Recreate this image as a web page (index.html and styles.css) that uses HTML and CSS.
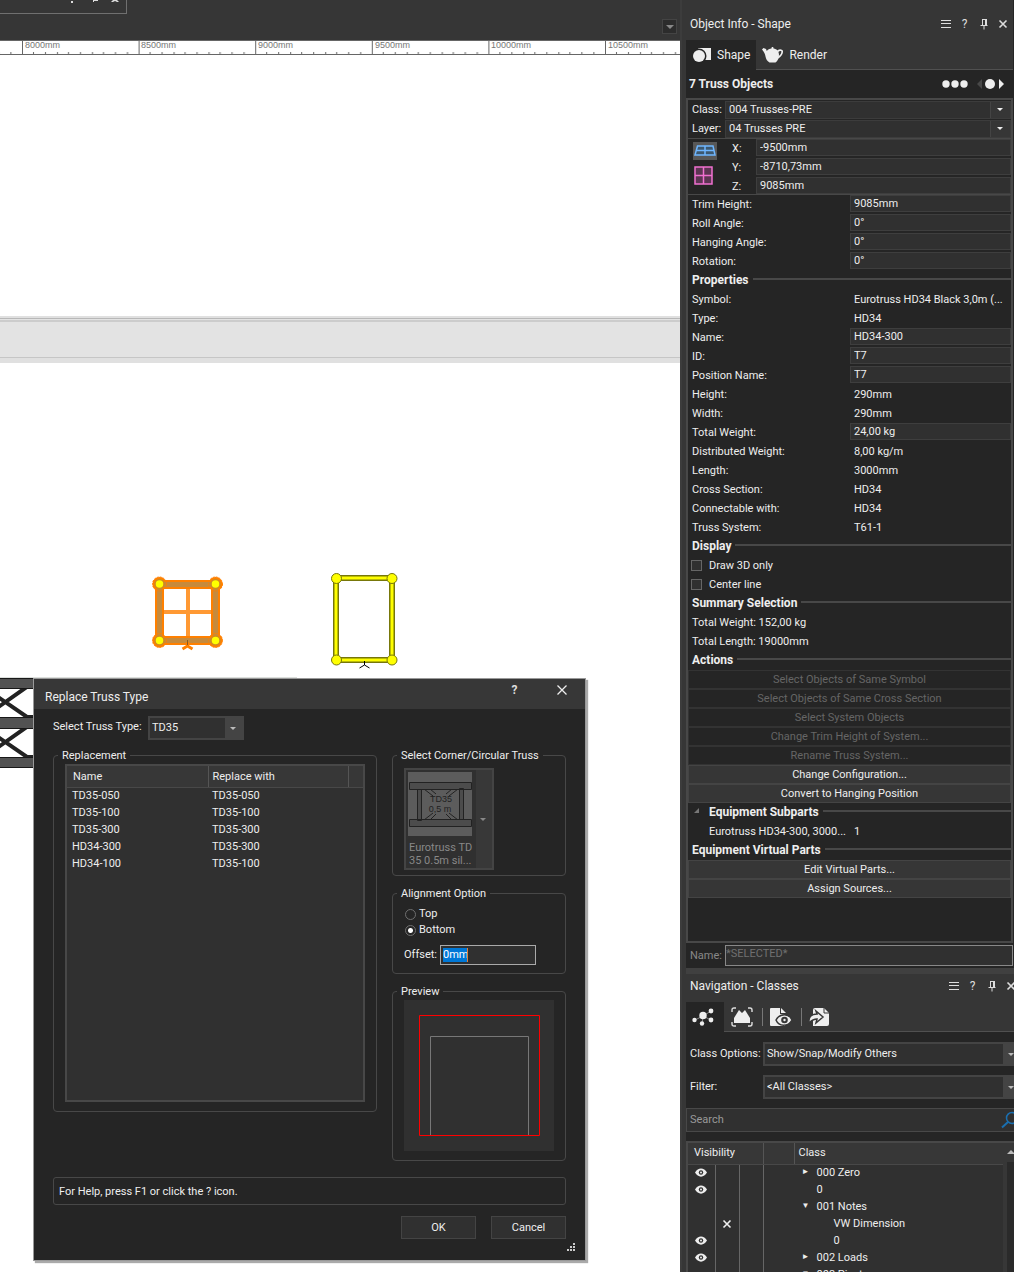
FILE: index.html
```html
<!DOCTYPE html>
<html lang="en">
<head>
<meta charset="utf-8">
<title>Replace Truss Type</title>
<link rel="stylesheet" href="styles.css">
</head>
<body>
<svg class="defs" width="0" height="0" aria-hidden="true">
  <symbol id="i-menu" viewBox="0 0 12 12"><path d="M1 2.500h10M1 5.500h10M1 9.500h10" stroke="currentColor" fill="none"/></symbol>
  <symbol id="i-pin" viewBox="0 0 12 12"><path d="M4 1.500h5M4.500 1.500v5.500M7.500 1v6M8.500 1v6M2.500 7.500h7M6 7.500v4" stroke="currentColor" fill="none"/></symbol>
  <symbol id="i-close" viewBox="0 0 12 12"><path d="M2.500 2.500l7 7M9.500 2.500l-7 7" stroke="currentColor" stroke-width="1.600" fill="none"/></symbol>
  <symbol id="i-eye" viewBox="0 0 12 9"><path d="M0 4.500C3-1 9-1 12 4.500C9 10 3 10 0 4.500z" fill="#eee"/><circle cx="6" cy="4.500" r="2.200" fill="#303030"/><circle cx="6" cy="4.500" r="1" fill="#eee"/></symbol>
</svg>
<div class="app">
  <main class="drawing">
    <div class="toolbar">
      <div class="stub">
        <svg width="60" height="4" viewBox="0 0 60 4"><path d="M0 1h2v2h-2zM22 0h5v1h-4v1h-1zM40 2l2-2h4l2 2h-2l-2-1l-2 1z" fill="#ddd"/></svg>
      </div>
      <button class="drop" aria-label="Views"><span class="tri"></span></button>
    </div>
    <svg class="ruler" height="15">
      <defs><pattern id="ticks" x="22" y="0" width="116.600" height="15" patternUnits="userSpaceOnUse"><path d="M11.500 12v3M23.500 12v3M35.500 12v3M46.500 12v3M58.500 12v3M70.500 12v3M81.500 12v3M93.500 12v3M105.500 12v3" stroke="#666"/><path d="M.5 0v15" stroke="#666"/></pattern></defs>
      <rect width="100%" height="15" fill="#fff"/><rect width="100%" height="15" fill="url(#ticks)"/>
      <path d="M0 .5h4000M0 14.500h4000" stroke="#666"/>
      <g class="marks"><text x="25" y="8">8000mm</text><text x="141" y="8">8500mm</text><text x="258" y="8">9000mm</text><text x="375" y="8">9500mm</text><text x="491" y="8">10000mm</text><text x="608" y="8">10500mm</text></g>
    </svg>
    <div class="canvas">
      <div class="beam"></div>
      <svg class="trusses" width="420" height="230" viewBox="0 550 420 230">
        <path d="M0 677.500h297" stroke="#dcdfdc"/>
        <g stroke="#222" stroke-width="4" fill="none"><path d="M-20 720L28 686h12M-18 686L27 717h12M-20 760L28 726h12M-18 726L27 757h12"/></g>
        <g fill="#525252"><path d="M0 679h40v9H0zM0 718h40v10H0zM0 758h40v9H0z"/></g>
        <path d="M0 678.500h40M0 688.500h40M0 717.500h40M0 728.500h40M0 757.500h40M0 767.500h40" stroke="#181818"/>
        <path d="M188 584v56M160 612h56" stroke="#ff9933" stroke-width="4"/>
        <g fill="#ff8000"><circle cx="159.500" cy="584" r="7"/><circle cx="215.500" cy="584" r="7"/><circle cx="159.500" cy="640.500" r="7"/><circle cx="215.500" cy="640.500" r="7"/></g>
        <rect x="159.500" y="584.500" width="56" height="56" fill="none" stroke="#ff8000" stroke-width="9"/>
        <rect x="159.500" y="584.500" width="56" height="56" fill="none" stroke="#c68a3c" stroke-width="5"/>
        <g fill="none" stroke="#ff8000" stroke-dasharray="2 1"><circle cx="159.500" cy="584" r="7"/><circle cx="215.500" cy="584" r="7"/><circle cx="159.500" cy="640.500" r="7"/><circle cx="215.500" cy="640.500" r="7"/></g>
        <g fill="#ff0" stroke="#d08a20" stroke-width="1.500"><circle cx="159.500" cy="584" r="4.500"/><circle cx="215.500" cy="584" r="4.500"/><circle cx="159.500" cy="640.500" r="4.500"/><circle cx="215.500" cy="640.500" r="4.500"/></g>
        <path d="M187.500 642v4l-5 3M187.500 646l5 3" stroke="#ff8000" stroke-width="3" fill="none"/>
        <path d="M187.500 640v5" stroke="#8a5a20"/>
        <rect x="336" y="578" width="56" height="82" fill="none" stroke="#77770a" stroke-width="6"/>
        <rect x="336" y="578" width="56" height="82" fill="none" stroke="#ff0" stroke-width="3"/>
        <g fill="#ff0" stroke="#77770a"><circle cx="336.500" cy="578.500" r="5"/><circle cx="392" cy="578.500" r="5"/><circle cx="336.500" cy="660" r="5"/><circle cx="392" cy="660" r="5"/></g>
        <path d="M364.500 661v4l-5 3M364.500 665l5 3" stroke="#000" fill="none"/>
      </svg>
      <section class="dialog" role="dialog" aria-labelledby="dlg-title">
        <header class="dlg-head">
          <h1 id="dlg-title">Replace Truss Type</h1>
          <button class="plain" aria-label="Help"><b>?</b></button>
          <button class="plain" aria-label="Close"><svg width="12" height="12" viewBox="0 0 12 12"><path d="M1.500 1.500l9 9M10.500 1.500l-9 9" stroke="#eee" stroke-width="1.300"/></svg></button>
        </header>
        <div class="dlg-body">
          <div class="type-row"><label for="tt">Select Truss Type:</label><span class="sel sel-lg type"><select id="tt"><option>TD35</option></select></span></div>
          <div class="columns">
            <fieldset class="repl"><legend>Replacement</legend>
              <div class="listbox"><table>
                <colgroup><col class="c-name"><col class="c-with"><col></colgroup>
                <thead><tr><th>Name</th><th>Replace with</th><th></th></tr></thead>
                <tbody>
                <tr><td>TD35-050</td><td>TD35-050</td><td></td></tr>
                <tr><td>TD35-100</td><td>TD35-100</td><td></td></tr>
                <tr><td>TD35-300</td><td>TD35-300</td><td></td></tr>
                <tr><td>HD34-300</td><td>TD35-300</td><td></td></tr>
                <tr><td>HD34-100</td><td>TD35-100</td><td></td></tr>
                </tbody></table></div>
            </fieldset>
            <div class="side">
              <fieldset><legend>Select Corner/Circular Truss</legend>
                <button class="picker" disabled>
                  <span class="pick-main">
                    <svg width="64" height="64" viewBox="0 0 64 64"><path fill="#5c5c5c" d="M0 0h64v64H0z"/><g fill="#4c4c4c" stroke="#222"><path d="M16 17l9 7M22 17l6 5M50 17l-9 7M44 17l-6 5M16 48l9-7M22 48l6-6M50 48l-9-7M44 48l-6-6"/><path d="M1.500 10.500h62v7h-62zM1.500 47.500h62v7h-62zM9.500 17.500h4v31h-4zM51.500 16.500h4v31h-4z"/></g><g class="thumb"><text x="33" y="30">TD35</text><text x="32" y="40">0,5 m</text></g></svg>
                    <span>Eurotruss TD<br>35 0.5m sil...</span>
                  </span>
                  <span class="pick-arrow"><span class="tri"></span></span>
                </button>
              </fieldset>
              <fieldset class="align"><legend>Alignment Option</legend>
                <label class="radio"><input type="radio" name="al">Top</label>
                <label class="radio"><input type="radio" name="al" checked>Bottom</label>
                <div class="offset"><label for="off">Offset:</label><span class="edit"><input id="off" value="0mm"></span></div>
              </fieldset>
              <fieldset class="prev"><legend>Preview</legend>
                <svg width="150" height="151" viewBox="0 0 150 151"><path fill="#303030" d="M0 0h150v151H0z"/><path d="M26.500 135V36.500h98V135" fill="none" stroke="#777"/><path d="M15.500 15.500h120v120h-120z" fill="none" stroke="#f00"/></svg>
              </fieldset>
            </div>
          </div>
          <p class="help">For Help, press F1 or click the ? icon.</p>
          <div class="actions"><button>OK</button><button>Cancel</button></div>
        </div>
        <svg class="grip" width="8" height="8" viewBox="0 0 8 8"><path d="M6 0h2v2H6zM3 3h2v2H3zM6 3h2v2H6zM0 6h2v2H0zM3 6h2v2H3zM6 6h2v2H6z" fill="#ccc"/></svg>
      </section>
    </div>
  </main>

  <aside class="panels">
    <section class="info">
      <header class="pal-head"><h2>Object Info - Shape</h2>
        <button class="plain" aria-label="Menu"><svg width="12" height="12"><use href="#i-menu"/></svg></button><button class="plain" aria-label="Help">?</button><button class="plain" aria-label="Pin"><svg width="12" height="12"><use href="#i-pin"/></svg></button><button class="plain" aria-label="Close"><svg width="12" height="12"><use href="#i-close"/></svg></button>
      </header>
      <nav class="tabs">
        <button class="tab on"><svg width="20" height="18" viewBox="0 0 20 18"><path d="M6 2h13v12h-6" fill="#eee"/><circle cx="7" cy="10" r="7.500" fill="#252525"/><circle cx="7" cy="10" r="6" fill="#eee"/></svg>Shape</button>
        <button class="tab"><svg width="22" height="18" viewBox="0 0 22 18"><path d="M9.500 2.500c-.5-2 2.500-2 2 0c3.500.3 5.500 3 5.500 6.500c0 3.500-1.500 6-3.500 7.500h-6C5 15 4 13 3.500 10.500C3 8 2.500 6.500 0 3.500l1.500-1.500l2.500 1l.8 2c1-1.500 2.700-2.300 4.700-2.500z" fill="#eee"/><path d="M15.500 5.500c2.500-2 5-1.500 4.700.500c-.3 3-2.200 4.500-4.700 6" fill="none" stroke="#eee" stroke-width="1.700"/></svg>Render</button>
      </nav>
      <div class="count"><h3>7 Truss Objects</h3><svg width="64" height="12" viewBox="0 0 64 12"><g fill="#eee"><circle cx="5" cy="6" r="3.700"/><circle cx="14" cy="6" r="3.700"/><circle cx="23" cy="6" r="3.700"/><circle cx="49" cy="6" r="5"/><path d="M58 1v10l5-5z"/></g><path d="M41 1v10l-5-5z" fill="#484848"/></svg></div>
      <div class="props">
        <div class="row"><label for="cls">Class:</label><span class="sel grow"><select id="cls"><option>004 Trusses-PRE</option></select></span></div>
        <div class="row"><label for="lay">Layer:</label><span class="sel grow"><select id="lay"><option>04 Trusses PRE</option></select></span></div>
        <div class="coords">
          <div class="planes">
            <svg width="24" height="18" viewBox="0 0 24 18"><path d="M0 0h24v18H0z" fill="#585858"/><path d="M4.500 4h15.500l2 9H2zM12 4v9M3.500 8.500h17" fill="#3c5870" stroke="#6fb6ff" stroke-width="1.500"/></svg>
            <svg width="20" height="20" viewBox="0 0 20 20"><path d="M2 2h17v17H2zM10.500 2v17M2 10.500h17" fill="#5c3553" stroke="#f070d0" stroke-width="1.500"/></svg>
          </div>
          <div class="xyz">
            <div class="row"><label for="x">X:</label><input id="x" value="-9500mm"></div>
            <div class="row"><label for="y">Y:</label><input id="y" value="-8710,73mm"></div>
            <div class="row"><label for="z">Z:</label><input id="z" value="9085mm"></div>
          </div>
        </div>
        <div class="row kv"><label for="trim">Trim Height:</label><input id="trim" value="9085mm"></div>
        <div class="row kv"><label for="roll">Roll Angle:</label><input id="roll" value="0°"></div>
        <div class="row kv"><label for="hang">Hanging Angle:</label><input id="hang" value="0°"></div>
        <div class="row kv"><label for="rot">Rotation:</label><input id="rot" value="0°"></div>
        <h4 class="sec">Properties</h4>
        <div class="row kv"><span>Symbol:</span><output>Eurotruss HD34 Black 3,0m (...</output></div>
        <div class="row kv"><span>Type:</span><output>HD34</output></div>
        <div class="row kv"><label for="nm">Name:</label><input id="nm" value="HD34-300"></div>
        <div class="row kv"><label for="id">ID:</label><input id="id" value="T7"></div>
        <div class="row kv"><label for="pos">Position Name:</label><input id="pos" value="T7"></div>
        <div class="row kv"><span>Height:</span><output>290mm</output></div>
        <div class="row kv"><span>Width:</span><output>290mm</output></div>
        <div class="row kv"><label for="tw">Total Weight:</label><input id="tw" value="24,00 kg"></div>
        <div class="row kv"><span>Distributed Weight:</span><output>8,00 kg/m</output></div>
        <div class="row kv"><span>Length:</span><output>3000mm</output></div>
        <div class="row kv"><span>Cross Section:</span><output>HD34</output></div>
        <div class="row kv"><span>Connectable with:</span><output>HD34</output></div>
        <div class="row kv"><span>Truss System:</span><output>T61-1</output></div>
        <h4 class="sec">Display</h4>
        <label class="row check"><input type="checkbox">Draw 3D only</label>
        <label class="row check"><input type="checkbox">Center line</label>
        <h4 class="sec">Summary Selection</h4>
        <div class="row">Total Weight: 152,00 kg</div>
        <div class="row">Total Length: 19000mm</div>
        <h4 class="sec">Actions</h4>
        <button class="act" disabled>Select Objects of Same Symbol</button>
        <button class="act" disabled>Select Objects of Same Cross Section</button>
        <button class="act" disabled>Select System Objects</button>
        <button class="act" disabled>Change Trim Height of System...</button>
        <button class="act" disabled>Rename Truss System...</button>
        <button class="act">Change Configuration...</button>
        <button class="act">Convert to Hanging Position</button>
        <h4 class="sec"><svg class="fold" width="17" height="6" viewBox="0 0 17 6"><path d="M7 0v5H2z" fill="#777"/></svg>Equipment Subparts</h4>
        <div class="row part"><span>Eurotruss HD34-300, 3000...</span><span>1</span></div>
        <h4 class="sec">Equipment Virtual Parts</h4>
        <button class="act">Edit Virtual Parts...</button>
        <button class="act">Assign Sources...</button>
      </div>
      <div class="name-row"><label for="sel">Name:</label><input id="sel" value="*SELECTED*" disabled></div>
    </section>

    <section class="nav">
      <header class="pal-head"><h2>Navigation - Classes</h2>
        <button class="plain" aria-label="Menu"><svg width="12" height="12"><use href="#i-menu"/></svg></button><button class="plain" aria-label="Help">?</button><button class="plain" aria-label="Pin"><svg width="12" height="12"><use href="#i-pin"/></svg></button><button class="plain" aria-label="Close"><svg width="12" height="12"><use href="#i-close"/></svg></button>
      </header>
      <nav class="tabs icons">
        <button class="tab on" aria-label="Classes"><svg width="22" height="18" viewBox="0 0 22 18"><path d="M3 12l8-4l8-5M11 8l8 4M11 8l-1 8" stroke="#888" fill="none"/><g fill="#eee"><circle cx="11" cy="7.500" r="3.700"/><circle cx="2.500" cy="12" r="2.200"/><circle cx="19" cy="3" r="2.400"/><circle cx="19" cy="12" r="2.400"/><circle cx="10" cy="15.500" r="2.200"/></g></svg></button>
        <button class="tab" aria-label="Viewports"><svg width="22" height="20" viewBox="0 0 22 20"><path d="M1 5V3q0-2 2-2h2M17 1h2q2 0 2 2v2M21 15v2q0 2-2 2h-2M5 19H3q-2 0-2-2v-2" stroke="#ddd" stroke-width="1.400" fill="none"/><path d="M3 16V11l5-8l3 3l3-3l5 8v5z" fill="#eee"/></svg></button>
        <i></i>
        <button class="tab" aria-label="Saved views"><svg width="24" height="20" viewBox="0 0 24 20"><path d="M1 2q0-1 1-1h9v6h5v12H2q-1 0-1-1z" fill="#eee"/><path d="M12 1l5 5h-5z" fill="#eee"/><path d="M7 13c4-7 13-7 16 0c-4 7-13 7-16 0z" fill="#eee" stroke="#363636" stroke-width="1.500"/><circle cx="15.500" cy="13" r="3.300" fill="#363636"/><circle cx="15.500" cy="13" r="1.200" fill="#eee"/></svg></button>
        <i></i>
        <button class="tab" aria-label="References"><svg width="22" height="20" viewBox="0 0 22 20"><path d="M7 1h9l5 5v11q0 2-2 2H5V3q0-2 2-2z" fill="#eee"/><path d="M16 1v5h5" fill="none" stroke="#363636"/><path d="M8 4l7 6l-7 6l1-4q-4 0-8 4q-1-9 8-9z" fill="#eee" stroke="#363636" stroke-width="1.500"/></svg></button>
      </nav>
      <div class="nav-form">
        <label for="co">Class Options:</label><span class="sel sel-lg"><select id="co"><option>Show/Snap/Modify Others</option></select></span>
        <label for="fi">Filter:</label><span class="sel sel-lg"><select id="fi"><option>&lt;All Classes&gt;</option></select></span>
      </div>
      <div class="search"><input aria-label="Search" placeholder="Search"><svg width="20" height="18" viewBox="0 0 20 18"><circle cx="11" cy="7" r="5.500" fill="none" stroke="#1a6fb0" stroke-width="1.500"/><path d="M7 11l-6 5.500" stroke="#1a6fb0" stroke-width="2"/></svg></div>
      <div class="classes">
        <table>
          <colgroup><col class="v1"><col class="v2"><col class="v2"><col class="v3"><col></colgroup>
          <thead><tr><th colspan="3">Visibility</th><th></th><th>Class</th></tr></thead>
          <tbody>
            <tr><td><svg width="12" height="9"><use href="#i-eye"/></svg></td><td></td><td></td><td colspan="2"><span class="exp">►</span>000 Zero</td></tr>
            <tr><td><svg width="12" height="9"><use href="#i-eye"/></svg></td><td></td><td></td><td colspan="2"><span class="exp"></span>0</td></tr>
            <tr><td></td><td></td><td></td><td colspan="2"><span class="exp">▼</span>001 Notes</td></tr>
            <tr><td></td><td><svg class="no" width="12" height="12"><use href="#i-close"/></svg></td><td></td><td colspan="2" class="deep"><span class="exp"></span>VW Dimension</td></tr>
            <tr><td><svg width="12" height="9"><use href="#i-eye"/></svg></td><td></td><td></td><td colspan="2" class="deep"><span class="exp"></span>0</td></tr>
            <tr><td><svg width="12" height="9"><use href="#i-eye"/></svg></td><td></td><td></td><td colspan="2"><span class="exp">►</span>002 Loads</td></tr>
            <tr><td></td><td></td><td></td><td colspan="2"><span class="exp">▼</span>003 Pivot</td></tr>
          </tbody>
        </table>
        <div class="scroll"><span class="tri up"></span><div class="track"></div></div>
      </div>
    </section>
  </aside>
</div>
</body>
</html>
```
FILE: styles.css
```css
*{box-sizing:border-box}
body{margin:0;background:#363636;color:#eee;font:11px/14px Roboto,"Liberation Sans",sans-serif}
h1,h2,h3,h4,p{margin:0;font-size:12px;font-weight:400}
button,input,select{font:inherit;color:inherit;margin:0;padding:0;border:0;background:none;border-radius:0}
svg{display:block;flex:none}
table{border-collapse:collapse;table-layout:fixed;width:100%}
th{font-weight:400;text-align:left}
th,td{padding:0;white-space:nowrap}
.defs{position:absolute}
.app{display:flex;height:100vh;overflow:hidden}
.tri{display:block;width:0;height:0;border:4px solid transparent;border-top-color:#888;border-bottom:0}
.plain{display:flex;align-items:center;justify-content:center;width:19px;height:19px;color:#ddd;font-size:12px}

/* drawing area */
.drawing{flex:1;min-width:0;display:flex;flex-direction:column}
.toolbar{height:40px;display:flex;justify-content:space-between;align-items:flex-start}
.stub{width:127px;height:14px;border:solid #707070;border-width:0 1px 1px 0;padding-left:71px}
.drop{width:15px;height:15px;margin:19px 3px 0 0;border:1px solid #444;background:#2c2c2c;display:flex;align-items:center;justify-content:center}
.ruler{width:100%}
.marks{font:9px "Liberation Sans",sans-serif;fill:#777}
.canvas{flex:1;position:relative;background:#fff;padding-top:261px}
.beam{height:47px;border:solid #e0e0e0;border-width:2px 0 5px;background:linear-gradient(#b8b8b8 1px,#e3e3e3 1px 2px,#ccc 2px 4px,#e3e3e3 4px 39px,#c6c6c6 39px)}
.trusses{position:absolute;left:0;top:495px}

/* dialog */
.dialog{position:absolute;left:33px;top:623px;width:553px;background:#252525;border:1px solid #999;box-shadow:2px 2px 1px #aaa}
.dlg-head{height:30px;background:#373737;display:flex;align-items:center;gap:28px;padding:6px 14px 0 11px}
.dlg-head h1{flex:1}
.dlg-head .plain{margin-top:-14px}
.dlg-body{padding:7px 19px 21px}
.type-row{display:flex;gap:6px;height:24px}
.type-row label{padding-top:4px;width:89px}
.type{width:96px}
.columns{display:grid;grid-template-columns:324px 1fr;gap:15px;margin-top:8px;align-items:start}
fieldset{margin:0;min-width:0;border:1px solid #484848;border-radius:4px;padding:0 11px 5px}
legend{margin-left:-7px;padding:1px 4px 0;height:14px}
.side{display:grid;gap:10px}
.listbox{border:2px solid #484848;background:#303030;height:338px;margin:2px 0 4px}
.listbox th{height:21px;padding-top:1px;background:#373737;border-right:1px solid #555;border-bottom:1px solid #484848;padding-left:6px}
.listbox th:nth-child(2){padding-left:4px}
.listbox th:last-child{border-right:0}
.listbox td{height:17px;padding:1px 0 0 5px}
.listbox td:nth-child(2){padding-left:4px}
.c-name{width:141px}.c-with{width:140px}
.picker{display:flex;width:90px;height:102px;margin-top:6px;border:2px solid #444;background:#303030;color:#888;text-align:left;line-height:13px}
.pick-main{width:70px;padding:2px 0 0 2px;white-space:nowrap}
.pick-main span{display:block;padding:5px 0 0 1px}
.pick-arrow{flex:1;height:100%;background:#383838;display:flex;align-items:center;padding-left:4px}
.thumb{font:9px "Liberation Sans",sans-serif;fill:#222;text-anchor:middle}
.pick-arrow .tri,.sel::after{border-width:3px 3px 0}
.radio{display:flex;align-items:center;gap:3px;height:16px}
.align{padding-top:6px;padding-bottom:8px}
.radio input{appearance:none;width:11px;height:11px;margin-left:1px;border:1px solid #707070;border-radius:50%;background:#252525}
.radio input:checked{background:radial-gradient(circle,#fff 2px,#252525 3px)}
.offset{display:flex;align-items:center;margin-top:7px}
.offset label{width:36px}
.edit{width:96px;height:20px;border:1px solid #aaa;background:#303030;padding:2px;display:flex}
.edit input{width:25px;background:#0078d7;color:#fff;line-height:14px;border-right:1px solid #e08040}
.prev{padding-top:2px;padding-bottom:9px}
.help{margin-top:16px;height:28px;padding:7px 5px 0;border:1px solid #484848;border-radius:3px;font-size:11px}
.actions{display:flex;justify-content:flex-end;gap:15px;margin-top:11px}
.actions button{width:75px;height:23px;border:1px solid #444;background:#303030}
.grip{position:absolute;right:10px;bottom:9px}

/* selects */
.sel{position:relative;display:flex;min-width:0}
.sel select{appearance:none;flex:1;min-width:0;height:18px;padding-left:3px;border:1px solid #3c3c3c;background:linear-gradient(90deg,#303030 calc(100% - 20px),#444 calc(100% - 20px) calc(100% - 19px),#363636 calc(100% - 19px))}
.sel::after{content:"";position:absolute;right:8px;top:7px;border-style:solid;border-color:#eee transparent transparent}
.sel-lg select{height:24px;padding-left:2px;border:2px solid #444;background:linear-gradient(90deg,#303030 calc(100% - 17px),#444 calc(100% - 17px))}
.sel-lg::after{top:11px;border-top-color:#bbb}

/* palettes */
.panels{width:334px;padding-left:4px;display:flex;flex-direction:column;overflow:hidden;background:#363636;border-left:2px solid #3c3c3c}
.info{padding-right:1px;background:#252525;border-bottom:1px solid #252525}
.pal-head{display:flex;align-items:center;padding:0 1px 0 4px;background:#363636}
.pal-head h2{flex:1}
.info .pal-head{height:40px;padding-top:8px}
.tabs{display:flex;height:30px;background:#363636;border-bottom:1px solid #505050}
.tab{display:flex;align-items:center;gap:5px;padding:0 6px;font-size:12px}
.tab.on{background:#252525;height:30px}
.count{display:flex;height:28px;align-items:center;justify-content:space-between;padding:0 8px 0 3px}
.count h3,.sec{font-weight:700}
.props{border:2px solid #484848;min-height:845px}
.row{display:flex;align-items:center;height:19px;padding-left:4px}
.row>label{flex:none}
.row>label[for=cls],.row>label[for=lay]{width:33px}
.grow{flex:1}
.row input:not([type]){flex:1;min-width:0;height:17px;padding-left:3px;margin-bottom:2px;border:1px solid #3e3e3e;background:#303030}
.coords{display:flex;border:solid #484848;border-width:1px 0;height:57px;overflow:hidden}
.planes{width:40px;padding:3px 0 0 5px;display:grid;gap:5px;align-content:start;justify-items:start}
.xyz{flex:1}
.xyz label{width:24px}
.kv>:first-child{width:158px}
.kv output{padding-left:4px;white-space:nowrap}
.sec{display:flex;align-items:center;height:19px;padding:0 0 2px 4px;white-space:nowrap}
.sec::after{content:"";flex:1;height:2px;background:#484848;margin:0 0 1px 4px}
.fold{margin-top:-2px}
.check{gap:7px}
.check input{appearance:none;width:11px;height:11px;margin:0 0 0 -1px;border:1px solid #666;background:#303030}
.act{display:block;width:100%;height:19px;border:1px solid #444;background:#363636;line-height:17px}
.act:disabled{background:#252525;border-color:#333;color:#666}
.part{padding-left:21px}
.part span:first-child{width:145px}
.name-row{display:flex;align-items:center;height:24px;padding-left:4px;color:#888}
.name-row label{width:35px;padding-top:2px}
.name-row input{flex:1;min-width:0;height:21px;padding-bottom:4px;border:1px solid #888;background:#303030;color:#707070}
.nav{flex:1;min-height:0;width:calc(100% + 8px);display:flex;flex-direction:column;border-top:6px solid #404040;background:#252525}
.nav .pal-head{flex:none;height:28px;padding-bottom:4px;padding-right:2px}
.icons{flex:none;align-items:center}
.icons i{width:1px;height:18px;background:#777}
.icons .tab{padding:0 9px 0 7px}
.icons .tab.on{padding:0 10px 0 6px}
.icons i+.tab{padding:0 8px 0 6px}
.nav-form{display:grid;grid-template-columns:73px 1fr;row-gap:9px;align-items:center;padding:10px 0 9px 4px}
.search{display:flex;flex:none;align-items:center;height:24px;border:1px solid #484848;background:#303030;padding-left:3px}
.search input{flex:1;min-width:0}
.search input::placeholder{color:#999;opacity:1}
.classes{flex:1;min-height:0;overflow:hidden;display:flex;align-items:stretch;margin-top:9px;border:2px solid #484848;border-bottom:0;background:#303030}
.classes table{flex:1;align-self:flex-start}
.classes thead{background:#373737}
.classes th{height:21px;border-right:1px solid #555;border-bottom:1px solid #484848;padding-left:4px}
.classes th:last-child{border-right:0}
.classes th:first-child{padding-left:6px}
.classes tbody td{height:17px;border-right:1px solid #666}
.classes tbody td:last-child{border-right:0;padding-left:36px}
.classes tbody td.deep{padding-left:53px}
.classes td svg{margin:0 auto}
.v1{width:27px}.v2{width:24px}.v3{width:31px}
.exp{display:inline-block;width:17px;font-size:8px;line-height:8px;padding:2px 0 0 2px;vertical-align:top}
.no{color:#eee}
.scroll{width:17px;background:#373737;padding-left:4px}
.up{margin-top:7px;border:4px solid transparent;border-top:0;border-bottom-color:#bbb}
.track{height:100%;margin-top:8px;background:#2a2a2a}
```
